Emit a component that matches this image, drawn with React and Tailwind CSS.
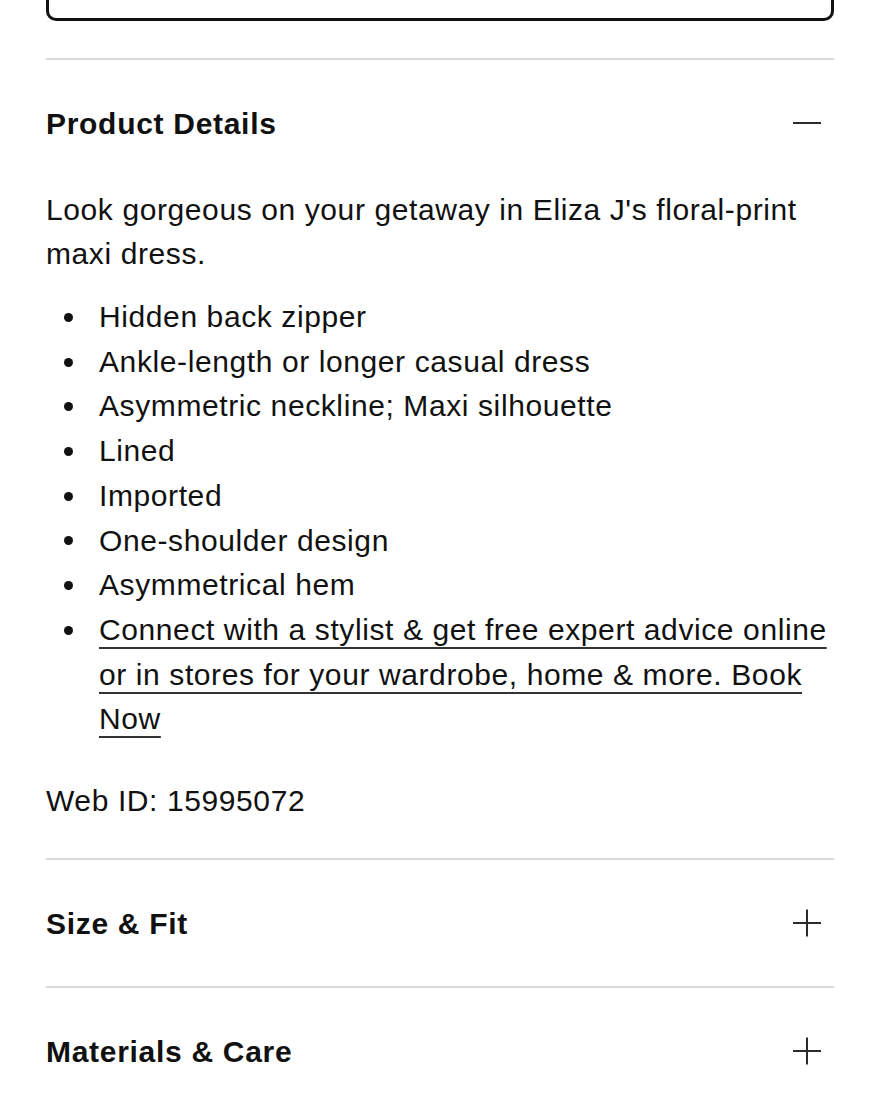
import { useState } from "react";

const bullets = [
  "Hidden back zipper",
  "Ankle-length or longer casual dress",
  "Asymmetric neckline; Maxi silhouette",
  "Lined",
  "Imported",
  "One-shoulder design",
  "Asymmetrical hem",
];

const Toggle = ({ open }) => (
  <svg viewBox="0 0 30 30" className="w-[30px] h-[30px] mr-[12px] shrink-0" fill="none">
    <line x1="1" y1="15" x2="29" y2="15" stroke="#2b2b2b" strokeWidth="2" />
    {!open && <line x1="15" y1="1.5" x2="15" y2="28.5" stroke="#2b2b2b" strokeWidth="2" />}
  </svg>
);

const Section = ({ title, open, onToggle, children }) => (
  <div>
    <div className="h-[2px] bg-[#d9d9d9]" />
    <button
      type="button"
      onClick={onToggle}
      className="w-full h-[126px] flex items-center justify-between text-left"
    >
      <span className="text-[30px] font-bold tracking-[0.7px] text-[#111]">{title}</span>
      <Toggle open={open} />
    </button>
    {open && children}
  </div>
);

const Dot = () => (
  <span className="w-[53px] h-[44.7px] shrink-0 flex items-center">
    <span className="ml-[18px] w-[9px] h-[9px] rounded-full bg-[#111]" />
  </span>
);

export default function App() {
  const [open, setOpen] = useState({ details: true, size: false, care: false });
  const flip = (k) => setOpen((o) => ({ ...o, [k]: !o[k] }));

  return (
    <div className="min-h-[1099px] bg-white px-[46px] font-['Liberation_Sans',Arial,sans-serif] text-[#111]">
      {/* bottom of the button above, cut off by the viewport */}
      <div className="h-[21px] border-x-[3px] border-b-[3px] border-[#111] rounded-b-[10px]" />

      <div className="mt-[37px]">
        <Section title="Product Details" open={open.details} onToggle={() => flip("details")}>
          <div className="pt-[2px] pb-[35px] text-[30px] leading-[44px] tracking-[0.6px]">
            <p>Look gorgeous on your getaway in Eliza J's floral-print maxi dress.</p>
            <ul className="mt-[19px] leading-[44.7px]">
              {bullets.map((b) => (
                <li key={b} className="flex">
                  <Dot />
                  <span>{b}</span>
                </li>
              ))}
              <li className="flex -mr-[6px]">
                <Dot />
                <a
                  href="#"
                  className="underline decoration-2 underline-offset-[7px] decoration-[#333]"
                >
                  Connect with a stylist &amp; get free expert advice online or in stores for your
                  wardrobe, home &amp; more. Book Now
                </a>
              </li>
            </ul>
            <p className="mt-[37px]">Web ID: 15995072</p>
          </div>
        </Section>
        <Section title="Size & Fit" open={open.size} onToggle={() => flip("size")} />
        <Section title="Materials & Care" open={open.care} onToggle={() => flip("care")} />
      </div>
    </div>
  );
}
